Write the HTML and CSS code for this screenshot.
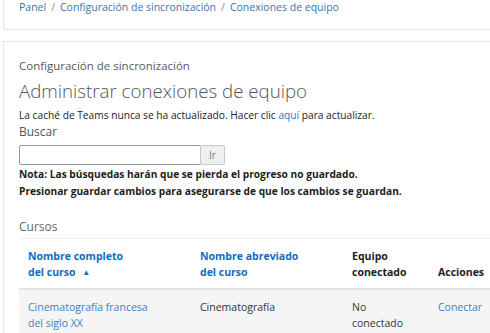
FILE: index.html
```html
<!DOCTYPE html>
<html lang="es">
<head>
    <meta charset="UTF-8">
    <meta name="viewport" content="width=device-width, initial-scale=1.0">
    <title>Conexiones de equipo</title>
    <link rel="stylesheet" href="styles.css">
</head>
<body>

    <!-- Breadcrumb -->
    <nav class="panel crumb-panel">
        <ol class="breadcrumb">
            <li><a href="#">Panel</a></li>
            <li class="sep">/</li>
            <li><a href="#">Configuración de sincronización</a></li>
            <li class="sep">/</li>
            <li><a href="#">Conexiones de equipo</a></li>
        </ol>
    </nav>

    <section class="panel main-panel">
        <p class="subtitle">Configuración de sincronización</p>
        <h1 class="page-title">Administrar conexiones de equipo</h1>
        <p class="cache-note">La caché de Teams nunca se ha actualizado. Hacer clic <a href="#">aquí</a> para actualizar.</p>

        <form class="search-form">
            <label for="search" class="search-label">Buscar</label>
            <div class="search-row">
                <input type="text" id="search" class="search-input">
                <button type="submit" class="search-btn">Ir</button>
            </div>
        </form>

        <p class="warning">Nota: Las búsquedas harán que se pierda el progreso no guardado.<br>
        Presionar guardar cambios para asegurarse de que los cambios se guardan.</p>

        <h2 class="section-title">Cursos</h2>

        <table class="courses">
            <thead>
                <tr>
                    <th class="col-full"><a href="#">Nombre completo<br>del curso <span class="sort">&#9650;</span></a></th>
                    <th class="col-short"><a href="#">Nombre abreviado<br>del curso</a></th>
                    <th class="col-team">Equipo<br>conectado</th>
                    <th class="col-actions">Acciones</th>
                </tr>
            </thead>
            <tbody>
                <tr>
                    <td><a href="#">Cinematografía francesa<br>del siglo XX</a></td>
                    <td>Cinematografía</td>
                    <td>No<br>conectado</td>
                    <td><a href="#">Conectar</a></td>
                </tr>
            </tbody>
        </table>
    </section>

</body>
</html>
```

FILE: styles.css
```css
/* Global Styles */
body {
    font-family: "Open Sans", "Noto Sans", sans-serif;
    margin: 0;
    padding: 0 0 0 3px;
    background-color: #ffffff;
    color: #1d2125;
    overflow: hidden;
}

a {
    text-decoration: none;
}

.panel {
    border: 1px solid #e6e6e6;
    margin-right: -40px;
    background-color: #ffffff;
}

/* Breadcrumb */
.crumb-panel {
    border-top: none;
    height: 29px;
    margin-bottom: 11px;
}

.breadcrumb {
    display: flex;
    gap: 5px;
    list-style: none;
    margin: 0;
    padding: 0 0 0 15px;
    font-size: 10.5px;
    line-height: 14px;
}

.breadcrumb a {
    color: #3a74ad;
}

.breadcrumb .sep {
    color: #8a8a8a;
}

/* Main panel */
.main-panel {
    padding: 15px 15px 0 15px;
}

.subtitle {
    margin: 0;
    font-size: 11.5px;
    line-height: 18px;
    color: #5a5a5a;
}

.page-title {
    margin: 0;
    font-size: 18.7px;
    font-weight: 300;
    line-height: 32px;
    color: #555;
}

.cache-note {
    margin: 0;
    font-size: 10.2px;
    line-height: 16px;
    color: #222;
}

.cache-note a {
    color: #1a76d2;
}

.search-label {
    display: block;
    font-size: 12px;
    line-height: 17px;
    color: #555;
}

.search-form {
    margin: 0;
}

.search-row {
    display: flex;
    margin-top: 5px;
}

.search-input {
    box-sizing: border-box;
    width: 182px;
    height: 20px;
    border: 1px solid #999;
    border-radius: 2px;
    margin: 0;
    padding: 0 4px;
}

.search-btn {
    box-sizing: border-box;
    width: 25px;
    height: 20px;
    margin: 0 0 0 -1px;
    padding: 0;
    border: 1px solid #c8c8c8;
    border-radius: 2px;
    background-color: #efefef;
    color: #777;
    font-family: "Open Sans", sans-serif;
    font-size: 10px;
}

.warning {
    margin: 1px 0 0 0;
    font-size: 10.2px;
    font-weight: bold;
    line-height: 17px;
    color: #1d1d1d;
}

.section-title {
    margin: 18px 0 0 0;
    font-size: 12px;
    font-weight: normal;
    line-height: 17px;
    color: #666;
}

/* Courses table */
.courses {
    width: 100%;
    margin-top: 3px;
    border-collapse: collapse;
    border-top: 1px solid #ececec;
    font-size: 10.5px;
    line-height: 16px;
}

.courses th,
.courses td {
    text-align: left;
    vertical-align: top;
    padding: 9px 9px 8px 9px;
}

.courses th {
    font-weight: bold;
    vertical-align: bottom;
    border-bottom: 2px solid #e2e2e2;
    color: #1d2125;
}

.courses th a {
    color: #0f6cbf;
}

.courses tbody tr {
    background-color: #f5f5f5;
}

.courses td {
    color: #333;
}

.courses td a {
    color: #3f7fbf;
}

.col-full { width: 154px; }
.col-short { width: 134px; }
.col-team { width: 68px; }

.sort {
    font-size: 8px;
    vertical-align: 1px;
    margin-left: 4px;
}
```
